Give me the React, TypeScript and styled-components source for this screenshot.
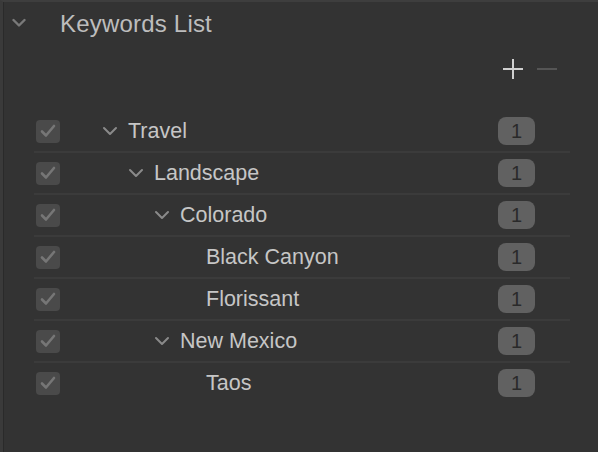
import React from "react";
import styled, { createGlobalStyle } from "styled-components";

const Global = createGlobalStyle`
  html, body { margin: 0; padding: 0; background: #333333; }
  body { font-family: "Liberation Sans", Arial, sans-serif; -webkit-font-smoothing: antialiased; }
`;

const Panel = styled.div`
  width: 598px;
  height: 452px;
  box-sizing: border-box;
  background: #333333;
  border-top: 2px solid #3e3e3e;
  border-left: 3px solid #3a3a3a;
  position: relative;
  overflow: hidden;
  &::before {
    content: "";
    position: absolute;
    left: 0;
    top: 0;
    bottom: 0;
    width: 1px;
    background: #2a2a2a;
  }
`;

const Header = styled.div`
  display: flex;
  align-items: center;
  height: 44px;
  padding-left: 9px;
`;

const HeaderChevron = styled.svg`
  width: 14px;
  height: 10px;
  margin-right: 34px;
  margin-top: -2px;
`;

const Title = styled.div`
  font-size: 24px;
  color: #bdbdbd;
  letter-spacing: 0.2px;
`;

const Toolbar = styled.div`
  display: flex;
  justify-content: flex-end;
  align-items: center;
  height: 46px;
  padding-right: 40px;
  gap: 12px;
`;

const ToolButton = styled.div`
  width: 22px;
  height: 22px;
  display: flex;
  align-items: center;
  justify-content: center;
`;

const List = styled.div`
  margin: 19px 0 0 31px;
  width: 536px;
  display: flex;
  flex-direction: column;
`;

const Row = styled.div`
  display: flex;
  align-items: center;
  height: 42px;
  box-sizing: border-box;
  padding-left: 2px;
  padding-right: 35px;
  border-bottom: 2px solid #3b3b3b;
  &:last-child {
    border-bottom-color: transparent;
  }
`;

const Check = styled.div`
  width: 24px;
  height: 23px;
  border-radius: 4px;
  background: #4a4a4a;
  display: flex;
  align-items: center;
  justify-content: center;
  flex-shrink: 0;
`;

const Label = styled.div<{ $level: number }>`
  flex: 1;
  display: flex;
  align-items: center;
  padding-left: ${(p) => 42 + p.$level * 26}px;
  font-size: 21.5px;
  color: #c6c6c6;
`;

const ChevronBox = styled.div`
  width: 16px;
  margin-right: 10px;
  display: flex;
  align-items: center;
  justify-content: center;
`;

const Badge = styled.div`
  width: 37px;
  height: 28px;
  border-radius: 8px;
  background: #616161;
  color: #2a2a2a;
  font-size: 20px;
  display: flex;
  align-items: center;
  justify-content: center;
  flex-shrink: 0;
`;

const items = [
  { name: "Travel", level: 0, expandable: true },
  { name: "Landscape", level: 1, expandable: true },
  { name: "Colorado", level: 2, expandable: true },
  { name: "Black Canyon", level: 3, expandable: false },
  { name: "Florissant", level: 3, expandable: false },
  { name: "New Mexico", level: 2, expandable: true },
  { name: "Taos", level: 3, expandable: false },
];

const Chevron = ({ color }: { color: string }) => (
  <svg width="16" height="10" viewBox="0 0 16 10">
    <polyline points="2,2 8,8 14,2" fill="none" stroke={color} strokeWidth="2" strokeLinecap="round" strokeLinejoin="round" />
  </svg>
);

export default function App() {
  return (
    <>
      <Global />
      <Panel>
        <Header>
          <HeaderChevron viewBox="0 0 14 10">
            <polyline points="1.5,2 7,7.5 12.5,2" fill="none" stroke="#7a7a7a" strokeWidth="2.4" strokeLinecap="round" strokeLinejoin="round" />
          </HeaderChevron>
          <Title>Keywords List</Title>
        </Header>
        <Toolbar>
          <ToolButton>
            <svg width="22" height="22" viewBox="0 0 22 22">
              <path d="M11 1v20M1 11h20" stroke="#cfcfcf" strokeWidth="2" />
            </svg>
          </ToolButton>
          <ToolButton>
            <svg width="22" height="22" viewBox="0 0 22 22">
              <path d="M1 11h20" stroke="#555555" strokeWidth="2" />
            </svg>
          </ToolButton>
        </Toolbar>
        <List>
          {items.map((it) => (
            <Row key={it.name}>
              <Check>
                <svg width="16" height="14" viewBox="0 0 16 14">
                  <polyline points="2,7.5 6,11.5 14,2" fill="none" stroke="#767676" strokeWidth="2.6" strokeLinecap="round" strokeLinejoin="round" />
                </svg>
              </Check>
              <Label $level={it.level}>
                <ChevronBox>{it.expandable && <Chevron color="#8a8a8a" />}</ChevronBox>
                {it.name}
              </Label>
              <Badge>1</Badge>
            </Row>
          ))}
        </List>
      </Panel>
    </>
  );
}
